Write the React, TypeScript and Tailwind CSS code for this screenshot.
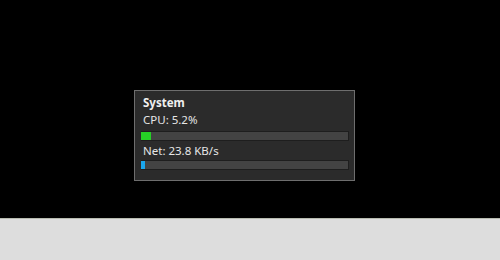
import React from 'react';

const Meter = ({ label, fill, color, gap }: { label: string; fill: number; color: string; gap: string }) => (
  <div className="flex flex-col">
    <div className="text-[11.5px] leading-[16px] text-[#e6e6e6] pl-[2px]">{label}</div>
    <div className={`${gap} h-[10px] w-[208px] bg-[#434343] border-y border-r border-[#1e1e1e] flex`}>
      <div className="h-full" style={{ width: `${fill}px`, backgroundColor: color }} />
    </div>
  </div>
);

export default function App() {
  return (
    <div className="w-[500px] h-[260px] flex flex-col" style={{ fontFamily: '"Noto Sans", "Open Sans", sans-serif' }}>
      <div className="h-[218px] bg-black pt-[90px] pl-[134px]">
        <div className="w-[221px] h-[91px] bg-[#2b2b2b] border border-[#6e6e6e] pl-[6px] pt-[4px] flex flex-col">
          <div className="text-[11.5px] leading-[16px] font-bold text-[#f0f0f0] pl-[2px]">System</div>
          <div className="mt-[1px]">
            <Meter label="CPU: 5.2%" fill={10} color="#26d026" gap="mt-[3px]" />
          </div>
          <div className="mt-[2px]">
            <Meter label="Net: 23.8 KB/s" fill={4} color="#1aa6ec" gap="mt-[1px]" />
          </div>
        </div>
      </div>
      <div className="flex-1 bg-[#dddddd] border-t border-[#b8bcb0]" />
    </div>
  );
}
